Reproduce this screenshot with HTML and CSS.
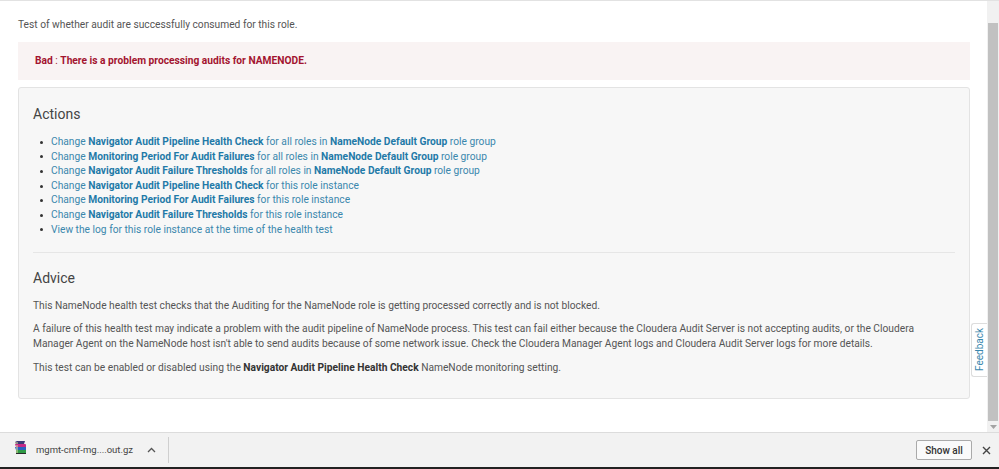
FILE: index.html
```html
<!DOCTYPE html>
<html lang="en">
<head>
<meta charset="utf-8">
<title>Health test</title>
<link rel="stylesheet" href="styles.css">
</head>
<body>
<div class="viewport">
  <main class="content">
    <p class="intro">Test of whether audit are successfully consumed for this role.</p>
    <div class="alert"><b>Bad</b> : <b>There is a problem processing audits for NAMENODE.</b></div>
    <section class="well">
      <h2>Actions</h2>
      <ul class="actions">
        <li><a>Change <b>Navigator Audit Pipeline Health Check</b> for all roles in <b>NameNode Default Group</b> role group</a></li>
        <li><a>Change <b>Monitoring Period For Audit Failures</b> for all roles in <b>NameNode Default Group</b> role group</a></li>
        <li><a>Change <b>Navigator Audit Failure Thresholds</b> for all roles in <b>NameNode Default Group</b> role group</a></li>
        <li><a>Change <b>Navigator Audit Pipeline Health Check</b> for this role instance</a></li>
        <li><a>Change <b>Monitoring Period For Audit Failures</b> for this role instance</a></li>
        <li><a>Change <b>Navigator Audit Failure Thresholds</b> for this role instance</a></li>
        <li><a>View the log for this role instance at the time of the health test</a></li>
      </ul>
      <hr>
      <h2>Advice</h2>
      <p>This NameNode health test checks that the Auditing for the NameNode role is getting processed correctly and is not blocked.</p>
      <p>A failure of this health test may indicate a problem with the audit pipeline of NameNode process. This test can fail either because the Cloudera Audit Server is not accepting audits, or the Cloudera Manager Agent on the NameNode host isn't able to send audits because of some network issue. Check the Cloudera Manager Agent logs and Cloudera Audit Server logs for more details.</p>
      <p>This test can be enabled or disabled using the <b>Navigator Audit Pipeline Health Check</b> NameNode monitoring setting.</p>
    </section>
  </main>
  <div class="scrollbar">
    <div class="thumb"></div>
    <svg class="arrow" width="7" height="4" viewBox="0 0 7 4"><path d="M0 0h7L3.500 4z" fill="#a3a3a3"/></svg>
  </div>
  <div class="feedback"><span>Feedback</span></div>
</div>
<footer class="downloads">
  <svg class="file-icon" width="14" height="14" viewBox="0 0 14 14">
    <path d="M1 1l2-1h8l-1 3H2z" fill="#3b3b78"/>
    <path d="M1 3h10l1 .500v2.500H2z" fill="#c42a86"/>
    <path d="M1 6h11v3H2z" fill="#2a62c0"/>
    <path d="M2 9h10v3H2z" fill="#2f9a46"/>
    <path d="M1 1h3v2H1zM2 4h2v8H2z" fill="#d9cf9a" opacity=".55"/>
    <path d="M2 12.500h10" stroke="#2b2b2b"/>
  </svg>
  <span class="file-name">mgmt-cmf-mg....out.gz</span>
  <svg class="chevron" width="9" height="6" viewBox="0 0 9 6"><path d="M1 5l3.500-3.500L8 5" fill="none" stroke="#555" stroke-width="1.300"/></svg>
  <div class="divider"></div>
  <div class="spacer"></div>
  <button class="show-all">Show all</button>
  <svg class="close" width="9" height="9" viewBox="0 0 9 9"><path d="M1 1l7 7M8 1l-7 7" stroke="#444" stroke-width="1.400"/></svg>
</footer>
</body>
</html>
```
FILE: styles.css
```css
* { box-sizing: border-box; }
html, body { margin: 0; height: 469px; overflow: hidden; }
body {
  display: flex;
  flex-direction: column;
  font-family: Roboto, "Liberation Sans", sans-serif;
  font-size: 10.23px;
  line-height: 14.6px;
  color: #555;
  background: #fff;
  border-bottom: 2px solid #222;
}
.viewport {
  position: relative;
  flex: 1;
  display: flex;
  min-height: 0;
  border-top: 1px solid #e2e2e2;
}
.content {
  flex: 1;
  min-width: 0;
  padding: 17px 17px 0 18px;
}
.intro { margin: 0 0 9px; }
.alert {
  height: 38px;
  padding: 12px 17px;
  background: #f9f3f3;
  color: #a3142f;
}
.alert b { font-weight: 700; }
.well {
  margin-top: 7px;
  height: 312px;
  padding: 16px 14px 0;
  background: #f7f7f7;
  border: 1px solid #e3e3e3;
  border-radius: 3px;
}
.well h2 {
  margin: 0;
  font-size: 14px;
  line-height: 20px;
  font-weight: 400;
  color: #444;
}
.actions {
  margin: 11.4px 0 0;
  padding: 0 0 0 7px;
  list-style: none;
}
.actions li { display: flex; align-items: center; }
.actions li::before {
  content: "";
  flex: none;
  width: 3px;
  height: 3px;
  margin-right: 8px;
  border-radius: 50%;
  background: #333;
}
.actions a { color: #3a87ad; }
.actions b { color: #1f7aa8; font-weight: 700; }
.well hr {
  margin: 15px 0 15px;
  border: 0;
  border-top: 1px solid #e6e6e6;
}
.well p { margin: 9px 0 0; }
.well h2 + p { margin-top: 10.6px; }
.well p b { color: #333; }
.scrollbar {
  position: relative;
  width: 12px;
  background: #f1f1f1;
  display: flex;
  flex-direction: column;
  align-items: center;
  padding: 22px 1px 3px;
  flex: none;
}
.thumb { width: 10px; flex: 1; background: #c1c1c1; }
.arrow { margin-top: 4px; }
.feedback {
  position: absolute;
  right: 12px;
  top: 322px;
  width: 16px;
  height: 54px;
  background: #fff;
  border: 1px solid #ddd;
  border-right: 0;
  border-radius: 3px 0 0 3px;
  display: flex;
  align-items: center;
  justify-content: center;
}
.feedback span {
  writing-mode: vertical-rl;
  transform: rotate(180deg);
  color: #3a87ad;
  font-size: 10px;
  line-height: 12px;
}
.downloads {
  flex: none;
  height: 35px;
  display: flex;
  align-items: center;
  background: #f2f2f2;
  border-top: 1px solid #dcdcdc;
  padding: 0 8px 0 14px;
}
.file-icon { flex: none; margin-top: -4px; }
.file-name { margin-left: 8px; color: #444; font-size: 9.500px; }
.chevron { margin-left: 14px; flex: none; }
.divider { width: 1px; height: 26px; background: #cfcfcf; margin-left: 12px; }
.spacer { flex: 1; }
.show-all {
  width: 56px;
  height: 20px;
  padding: 0;
  font: 500 10px Roboto, "Liberation Sans", sans-serif;
  color: #333;
  background: #fafafa;
  border: 1px solid #aaa;
  border-radius: 2px;
}
.close { margin-left: 10px; flex: none; }
```
